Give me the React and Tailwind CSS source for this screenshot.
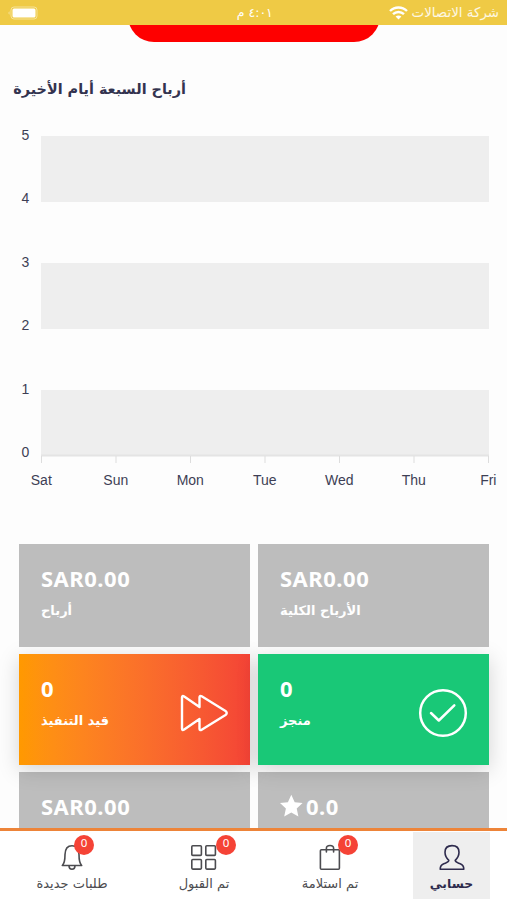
const DAYS = ['Sat', 'Sun', 'Mon', 'Tue', 'Wed', 'Thu', 'Fri']
const LEVELS = [5, 4, 3, 2, 1, 0]

function StatusBar() {
  return (
    <header className="flex h-[25px] shrink-0 items-center justify-between bg-[#efca45] pl-[8px] pr-[8px] text-white">
      <svg className="h-[14px] w-[30px]" viewBox="0 0 30 14">
        <rect x="3" y="1" width="26" height="12" rx="3" fill="none" stroke="#fff" strokeOpacity="0.45" />
        <path d="M1.5 5.2C.2 5.8 .2 8.2 1.5 8.8Z" fill="#fff" fillOpacity="0.5" />
        <rect x="4.5" y="2.5" width="23" height="9" rx="1.5" fill="#fff" />
      </svg>
      <span dir="rtl" className="ml-[83px] text-[12.5px] leading-[27px]">
        ٤:٠١ م
      </span>
      <div className="flex items-center gap-[4px]">
        <svg className="h-[14px] w-[19px]" viewBox="0 0 19 14" fill="none" stroke="#fff" strokeWidth="2.4">
          <path d="M1 5C5.8 .3 13.2 .3 18 5" />
          <path d="M4 8.2C7.2 5.2 11.8 5.2 15 8.2" />
          <path d="M6.6 10.6C8.3 9.2 10.7 9.2 12.4 10.6L9.5 13.5Z" fill="#fff" stroke="none" />
        </svg>
        <span dir="rtl" className="text-[13.4px] leading-[27px] text-white/85">
          شركة الاتصالات
        </span>
      </div>
    </header>
  )
}

function EarningsChart() {
  return (
    <svg
      className="block h-[374px] w-full"
      viewBox="0 0 507 374"
      fontFamily="'Liberation Sans', sans-serif"
      fontSize="14"
      fill="#3d3f55"
    >
      <rect x="41" y="10" width="448" height="66" fill="#eee" />
      <rect x="41" y="137" width="448" height="66" fill="#eee" />
      <rect x="41" y="264" width="448" height="66" fill="#eee" />
      <rect x="41" y="328.5" width="448" height="2" fill="#e4e4e4" />
      {LEVELS.map((level, i) => (
        <text key={level} x="25.5" y={13.7 + i * 63.5} textAnchor="middle">
          {level}
        </text>
      ))}
      {DAYS.map((day, i) => (
        <g key={day}>
          <rect x={41 + i * 74.5} y="330" width="1" height="7" fill="#ddd" />
          <text x={41.3 + i * 74.5} y="359.4" textAnchor="middle">
            {day}
          </text>
        </g>
      ))}
    </svg>
  )
}

function StatCard({ value, label, star, className, icon }) {
  return (
    <div className={`flex justify-between pl-[22px] pr-[21px] text-white ${className}`}>
      <div className="flex flex-col items-start pt-[20px]">
        <div className="flex h-[28px] items-center gap-[2px] font-['Noto_Sans'] text-[22px] font-bold leading-[28px] tracking-[0.5px]">
          {star && (
            <svg className="h-[24px] w-[24px]" viewBox="0 0 24 24" fill="#fff">
              <path d="M11.3 .8 14.7 8.2 22.6 9.1 16.7 14.6 18.4 22.6 11.3 18.6 4.2 22.6 5.9 14.6 0 9.1 7.9 8.2Z" />
            </svg>
          )}
          {value}
        </div>
        {label && (
          <div dir="rtl" className="mt-[9px] whitespace-nowrap text-[13px] font-bold leading-[20px]">
            {label}
          </div>
        )}
      </div>
      {icon}
    </div>
  )
}

function ForwardIcon() {
  return (
    <svg
      className="mt-[34px] h-[50px] w-[50px]"
      viewBox="0 0 50 50"
      fill="none"
      stroke="#fff"
      strokeWidth="2.4"
      strokeLinejoin="round"
    >
      <path d="M3 9.5Q3 7 5.2 8.5L20.5 19V9.5Q20.5 7 22.7 8.3L46.5 23Q49 25 46.5 27L22.7 41.7Q20.5 43 20.5 40.5V31L5.2 41.5Q3 43 3 40.5Z" />
    </svg>
  )
}

function CheckIcon() {
  return (
    <svg
      className="mt-[34px] h-[50px] w-[50px]"
      viewBox="0 0 50 50"
      fill="none"
      stroke="#fff"
      strokeWidth="2.5"
      strokeLinecap="round"
      strokeLinejoin="round"
    >
      <circle cx="25" cy="25" r="22.8" />
      <path d="M13 25 20.8 32.5 36.3 17.3" />
    </svg>
  )
}

function NavIcon({ children }) {
  return (
    <svg
      className="h-[28px] w-[28px]"
      viewBox="0 0 28 28"
      fill="none"
      stroke="currentColor"
      strokeWidth="1.6"
      strokeLinejoin="round"
      strokeLinecap="round"
    >
      {children}
    </svg>
  )
}

function NavItem({ label, count, active, className, badgeClass, children }) {
  return (
    <button
      className={`flex h-[67px] flex-col items-center pt-[11px] ${
        active ? 'bg-[#eee] font-bold text-[#2e2b4d]' : 'text-[#4c4c50]'
      } ${className}`}
    >
      <span className="relative block">
        {children}
        {count !== undefined && (
          <span
            className={`absolute -top-[8px] h-[20px] w-[20px] rounded-full bg-[#f54336] text-center font-['Noto_Sans'] text-[11.5px] leading-[16px] text-white ${badgeClass}`}
          >
            {count}
          </span>
        )}
      </span>
      <span
        dir="rtl"
        className={`mt-[4px] whitespace-nowrap leading-[18px] ${active ? 'text-[12.4px]' : 'text-[13px]'}`}
      >
        {label}
      </span>
    </button>
  )
}

function BottomNav() {
  return (
    <nav className="relative z-20 flex h-[72px] shrink-0 border-t-[3px] border-[#ed8439] bg-white pt-px">
      <NavItem label="طلبات جديدة" count={0} className="ml-[22px] w-[100px]" badgeClass="left-[16px]">
        <NavIcon>
          <path d="M4.3 22.5C6.8 20.2 7 17 7 11.5 7.2 5.5 9.8 2.8 14 2.8S20.8 5.5 21 11.5C21 17 21.2 20.2 23.7 22.5Z" />
          <path d="M11 22.8C11 27.3 17 27.3 17 22.8" />
        </NavIcon>
      </NavItem>
      <NavItem label="تم القبول" count={0} className="ml-[32px] w-[100px]" badgeClass="left-[26px]">
        <NavIcon>
          <rect x="1.8" y="2.8" width="9.6" height="9.6" rx="1" />
          <rect x="15.8" y="2.8" width="9.6" height="9.6" rx="1" />
          <rect x="1.8" y="16.5" width="9.6" height="9.6" rx="1" />
          <rect x="15.8" y="16.5" width="9.6" height="9.6" rx="1" />
        </NavIcon>
      </NavItem>
      <NavItem label="تم استلامة" count={0} className="ml-[26px] w-[100px]" badgeClass="left-[22px]">
        <NavIcon>
          <rect x="4.4" y="6.8" width="19" height="19.4" rx="1" />
          <path d="M10.4 9V5.2Q10.4 2.5 14 2.5T17.6 5.2V9" />
        </NavIcon>
      </NavItem>
      <NavItem label="حسابي" active className="ml-[33px] w-[77px]">
        <NavIcon>
          <path d="M10.8 17.3C8.2 14.8 7 12.1 7 9.2 7 5 9.7 2.6 14 2.6S21 5 21 9.2C21 12.1 19.8 14.8 17.2 17.3 17.2 19.3 19 19.5 22.2 20.7 25.2 21.8 25.8 23.2 25.8 26.2H2.2C2.2 23.2 2.8 21.8 5.8 20.7 9 19.5 10.8 19.3 10.8 17.3Z" />
        </NavIcon>
      </NavItem>
    </nav>
  )
}

export default function App() {
  return (
    <div className="flex h-[900px] w-[507px] flex-col overflow-hidden bg-[#fdfdfd] font-['DejaVu_Sans',sans-serif]">
      <StatusBar />
      <main className="flex min-h-0 flex-1 flex-col overflow-hidden">
        <div className="flex h-[17px] shrink-0 flex-col justify-end overflow-hidden">
          <div className="ml-[128px] h-[52px] w-[252px] shrink-0 rounded-[26px] bg-[#fe0000]" />
        </div>
        <h1 dir="rtl" className="mt-[34px] mr-[321px] h-[24px] shrink-0 whitespace-nowrap text-[14.4px] font-bold leading-[26px] text-[#33334f]">
          أرباح السبعة أيام الأخيرة
        </h1>
        <div className="mt-[26px] shrink-0">
          <EarningsChart />
        </div>
        <section className="mt-[44px] grid shrink-0 grid-cols-[231px_231px] grid-rows-[103px_111px_103px] gap-x-[8px] gap-y-[7px] pl-[19px]">
          <StatCard value="SAR0.00" label="أرباح" className="relative z-10 bg-[#bdbdbd]" />
          <StatCard value="SAR0.00" label="الأرباح الكلية" className="relative z-10 bg-[#bdbdbd]" />
          <StatCard
            value="0"
            label="قيد التنفيذ"
            icon={<ForwardIcon />}
            className="relative bg-linear-to-r from-[#ff9900] to-[#f44336] shadow-[0_5px_20px_rgba(0,0,0,0.17)]"
          />
          <StatCard
            value="0"
            label="منجز"
            icon={<CheckIcon />}
            className="relative bg-[#19c877] shadow-[0_5px_20px_rgba(0,0,0,0.17)]"
          />
          <StatCard value="SAR0.00" className="bg-[#bdbdbd]" />
          <StatCard value="0.0" star className="bg-[#bdbdbd]" />
        </section>
      </main>
      <BottomNav />
    </div>
  )
}
